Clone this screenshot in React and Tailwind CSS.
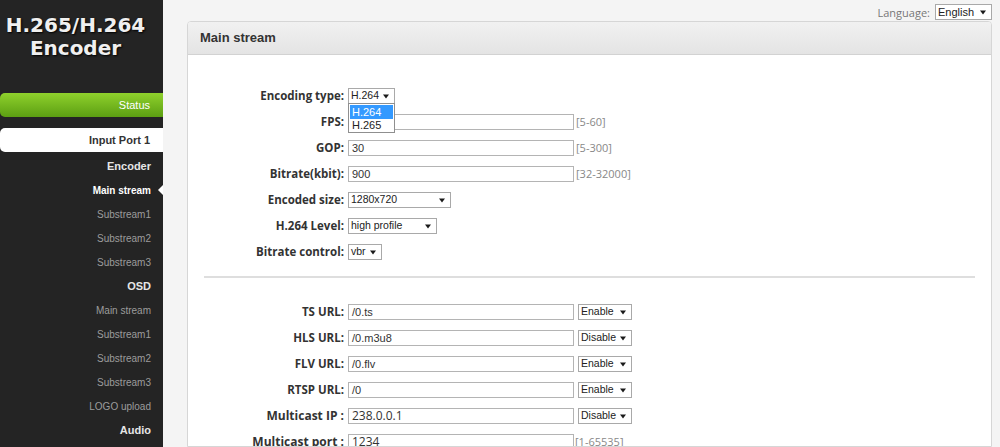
import React from 'react';

const NAV = [
  { label: "Encoder", kind: "head" },
  { label: "Main stream", kind: "active" },
  { label: "Substream1", kind: "sub" },
  { label: "Substream2", kind: "sub" },
  { label: "Substream3", kind: "sub" },
  { label: "OSD", kind: "head" },
  { label: "Main stream", kind: "sub" },
  { label: "Substream1", kind: "sub" },
  { label: "Substream2", kind: "sub" },
  { label: "Substream3", kind: "sub" },
  { label: "LOGO upload", kind: "sub" },
  { label: "Audio", kind: "head" },
];

const URLS = [
  { label: "TS URL:", value: "/0.ts", mode: "Enable" },
  { label: "HLS URL:", value: "/0.m3u8", mode: "Disable" },
  { label: "FLV URL:", value: "/0.flv", mode: "Enable" },
  { label: "RTSP URL:", value: "/0", mode: "Enable" },
];

function Arrow() {
  return (
    <svg width="6" height="5" viewBox="0 0 6 5" className="shrink-0">
      <path d="M0 0.5h6L3 4.5z" fill="#1a1a1a" />
    </svg>
  );
}

function Select({ value, className }) {
  return (
    <div className={`flex items-center justify-between h-[16px] border border-[#a9a9a9] bg-white pl-[2px] pr-[5px] text-[10.5px] text-[#222] font-['Liberation_Sans',Arial,sans-serif] ${className}`}>
      <span>{value}</span>
      <Arrow />
    </div>
  );
}

function TextBox({ value, big }) {
  return (
    <div className={`w-[226px] h-[16px] border border-[#b4b4b4] bg-white pl-[3px] flex items-center text-[#333] ${big ? "text-[12px] font-['Open_Sans',sans-serif]" : "text-[11px] font-['Liberation_Sans',Arial,sans-serif]"}`}>
      {value}
    </div>
  );
}

function Row({ label, big, children }) {
  return (
    <div className="h-[26px] flex items-center">
      <div className={`w-[156px] text-right font-bold text-[#333] font-['Open_Sans',sans-serif] ${big ? "text-[12px]" : "text-[11.5px]"}`}>
        {label}
      </div>
      <div className="ml-[4px] flex items-center">{children}</div>
    </div>
  );
}

function Hint({ children }) {
  return <span className="ml-[2px] text-[11px] text-[#888] font-['Open_Sans',sans-serif]">{children}</span>;
}

export default function App() {
  return (
    <div className="w-[1000px] h-[447px] overflow-hidden flex bg-[#f4f4f4] font-['Liberation_Sans',Arial,sans-serif]">
      {/* sidebar */}
      <div className="w-[163px] shrink-0 bg-[#242424] flex flex-col">
        <div className="h-[93px] pt-[14px] pr-[12px] text-center font-['DejaVu_Sans',sans-serif] font-bold text-[20px] leading-[23px] text-[#f0f0f0] [text-shadow:1px_1px_2px_#000]">
          <div>H.265/H.264</div>
          <div>Encoder</div>
        </div>
        <div className="h-[24px] rounded-l-[5px] bg-linear-to-b from-[#8fd12c] to-[#5c9f12] flex items-center justify-end pr-[13px] text-[11px] text-white">
          Status
        </div>
        <div className="mt-[11px] h-[24px] rounded-l-[5px] bg-white flex items-center justify-end pr-[13px] text-[11px] font-bold text-[#333]">
          Input Port 1
        </div>
        <div className="mt-[2px] flex flex-col">
          {NAV.map((item, i) => (
            <div key={i} className="relative h-[24px] flex items-center justify-end pr-[12px]">
              {item.kind === "head" && <span className="text-[11px] font-bold text-[#e6e6e6]">{item.label}</span>}
              {item.kind === "active" && <span className="text-[10px] font-bold text-white">{item.label}</span>}
              {item.kind === "sub" && <span className="text-[10px] text-[#9c9c9c]">{item.label}</span>}
              {item.kind === "active" && (
                <span className="absolute right-0 top-[7px] w-0 h-0 border-y-[5px] border-y-transparent border-r-[5px] border-r-white" />
              )}
            </div>
          ))}
        </div>
      </div>

      {/* main */}
      <div className="flex-1 flex flex-col pl-[24px] pr-[8px]">
        <div className="h-[21px] shrink-0 flex items-start justify-end pt-[4px]">
          <span className="mr-[5px] mt-[1px] text-[11px] text-[#777] font-['Open_Sans',sans-serif]">Language:</span>
          <Select value="English" className="w-[57px] text-[11px] border-[#9a9a9a]" />
        </div>

        <div className="flex-1 border border-[#d6d6d6] rounded-t-[4px] bg-white overflow-hidden">
          <div className="h-[33px] bg-linear-to-b from-[#f1f1f1] to-[#e4e4e4] border-b border-[#d2d2d2] flex items-center pl-[12px] text-[13px] font-bold text-[#333]">
            Main stream
          </div>

          <div className="pt-[28px]">
            <Row label="Encoding type:">
              <div className="relative">
                <Select value="H.264" className="w-[47px]" />
                <div className="absolute left-0 top-[15px] z-10 w-[47px] border border-[#8f8f8f] bg-white text-[11px] text-[#222]">
                  <div className="h-[14px] mx-[1px] mt-[1px] bg-[#3399ff] text-white pl-[2px] leading-[14px]">H.264</div>
                  <div className="h-[13px] pl-[3px] leading-[13px]">H.265</div>
                </div>
              </div>
            </Row>
            <Row label="FPS:">
              <TextBox value="" />
              <Hint>[5-60]</Hint>
            </Row>
            <Row label="GOP:">
              <TextBox value="30" />
              <Hint>[5-300]</Hint>
            </Row>
            <Row label="Bitrate(kbit):">
              <TextBox value="900" />
              <Hint>[32-32000]</Hint>
            </Row>
            <Row label="Encoded size:">
              <Select value="1280x720" className="w-[103px]" />
            </Row>
            <Row label="H.264 Level:">
              <Select value="high profile" className="w-[89px]" />
            </Row>
            <Row label="Bitrate control:">
              <Select value="vbr" className="w-[34px]" />
            </Row>

            <div className="mt-[11px] mx-[16px] h-[2px] bg-[#dedede]" />

            <div className="mt-[21px]">
              {URLS.map((u) => (
                <Row key={u.label} label={u.label}>
                  <TextBox value={u.value} />
                  <Select value={u.mode} className="ml-[4px] w-[54px]" />
                </Row>
              ))}
              <Row label="Multicast IP :" big>
                <TextBox value="238.0.0.1" big />
                <Select value="Disable" className="ml-[4px] w-[54px]" />
              </Row>
              <Row label="Multicast port :" big>
                <TextBox value="1234" big />
                <span className="ml-[1px] text-[11px] text-[#888] font-['Open_Sans',sans-serif]">[1-65535]</span>
              </Row>
            </div>
          </div>
        </div>
      </div>
    </div>
  );
}
